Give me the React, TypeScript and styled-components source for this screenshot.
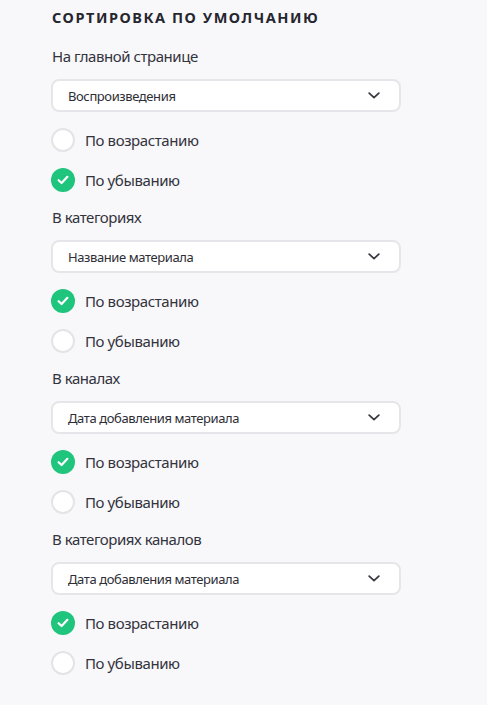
import React, { useState } from "react";
import styled, { createGlobalStyle } from "styled-components";

const Global = createGlobalStyle`
  html, body { margin: 0; padding: 0; background: #f8f8fb; }
  body { font-family: "Noto Sans", "Open Sans", sans-serif; color: #2e2e36; }
`;

const Page = styled.div`
  padding: 7px 0 30px 51px;
  width: 350px;
`;

const Heading = styled.h2`
  margin: 0 0 19px 1px;
  font-size: 14.5px;
  line-height: 20px;
  font-weight: 700;
  letter-spacing: 1.55px;
  text-transform: uppercase;
  color: #26262e;
`;

const Section = styled.section`
  display: flex;
  flex-direction: column;
  margin-bottom: 7px;
`;

const Label = styled.div`
  font-size: 15px;
  line-height: 20px;
  letter-spacing: -0.45px;
  margin: 0 0 13px 1px;
  color: #33333b;
`;

const Select = styled.button`
  display: flex;
  align-items: center;
  justify-content: space-between;
  box-sizing: border-box;
  width: 350px;
  height: 33px;
  margin: 0 0 8px;
  padding: 0 19px 0 15px;
  background: #fff;
  border: 2px solid #e6e6ea;
  border-radius: 8px;
  font-family: inherit;
  font-size: 13px;
  letter-spacing: -0.4px;
  color: #2e2e36;
  cursor: pointer;
  text-align: left;
`;

const RadioRow = styled.label`
  display: flex;
  align-items: center;
  gap: 10px;
  height: 40px;
  font-size: 15px;
  letter-spacing: -0.4px;
  color: #33333b;
  cursor: pointer;
`;

const Circle = styled.span<{ $on: boolean }>`
  box-sizing: border-box;
  width: 24px;
  height: 24px;
  border-radius: 50%;
  display: flex;
  align-items: center;
  justify-content: center;
  background: ${(p) => (p.$on ? "#1fc47d" : "#fff")};
  border: ${(p) => (p.$on ? "none" : "2px solid #e4e4e8")};
`;

const Chevron = () => (
  <svg width="12" height="7" viewBox="0 0 12 7" fill="none">
    <path d="M1.2 1.2 L6 5.6 L10.8 1.2" stroke="#3a3a42" strokeWidth="1.8" strokeLinecap="round" strokeLinejoin="round" />
  </svg>
);

const Check = () => (
  <svg width="12" height="10" viewBox="0 0 12 10" fill="none">
    <path d="M1.6 5.2 L4.6 8 L10.4 1.8" stroke="#fff" strokeWidth="2.2" strokeLinecap="round" strokeLinejoin="round" />
  </svg>
);

type Block = { label: string; value: string; desc: boolean };

const initial: Block[] = [
  { label: "На главной странице", value: "Воспроизведения", desc: true },
  { label: "В категориях", value: "Название материала", desc: false },
  { label: "В каналах", value: "Дата добавления материала", desc: false },
  { label: "В категориях каналов", value: "Дата добавления материала", desc: false },
];

export default function App() {
  const [blocks, setBlocks] = useState(initial);
  const setDesc = (i: number, d: boolean) =>
    setBlocks((b) => b.map((x, j) => (j === i ? { ...x, desc: d } : x)));
  return (
    <Page>
      <Global />
      <Heading>Сортировка по умолчанию</Heading>
      {blocks.map((b, i) => (
        <Section key={i}>
          <Label>{b.label}</Label>
          <Select type="button">
            <span>{b.value}</span>
            <Chevron />
          </Select>
          <RadioRow onClick={() => setDesc(i, false)}>
            <Circle $on={!b.desc}>{!b.desc && <Check />}</Circle>
            По возрастанию
          </RadioRow>
          <RadioRow onClick={() => setDesc(i, true)}>
            <Circle $on={b.desc}>{b.desc && <Check />}</Circle>
            По убыванию
          </RadioRow>
        </Section>
      ))}
    </Page>
  );
}
